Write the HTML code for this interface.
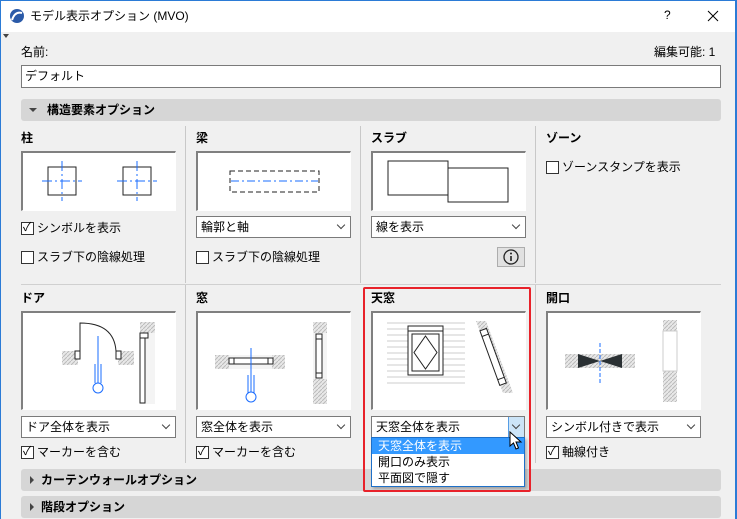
<!DOCTYPE html>
<html><head><meta charset="utf-8"><style>
*{box-sizing:border-box;margin:0;padding:0}
body{width:737px;height:519px;overflow:hidden;background:#f0f0f0;font-family:"Liberation Sans","Noto Sans CJK JP",sans-serif;font-size:12px;color:#000;position:relative}
.a{position:absolute}
.t{position:absolute;white-space:nowrap;line-height:14px}
.b{font-weight:bold}
.hdr{position:absolute;left:21px;width:700px;height:22px;background:#d6d6d6;border-radius:3px}
.hdr span{position:absolute;left:26px;top:4px;font-weight:bold;line-height:14px}
.prev{position:absolute;width:155px;background:#fff;border:1px solid #fff;border-top:2px solid #808080;border-left:2px solid #808080}
.dd{position:absolute;width:155px;height:22px;background:#fff;border:1px solid #7a7a7a}
.dd span{position:absolute;left:4px;top:3px;line-height:14px}
.dd i{position:absolute;right:6px;top:5px;width:6px;height:6px;border-right:1px solid #444;border-bottom:1px solid #444;transform:rotate(45deg)}
.cb{position:absolute;width:13px;height:13px;border:1px solid #333;background:#fff}
.vl{position:absolute;width:1px;background:#c8c8c8}
.top{z-index:5}
</style></head><body>
<div class="a" style="left:0;top:0;width:737px;height:32px;background:#fff"></div>
<div class="a" style="left:0;top:0;width:1px;height:519px;background:#2b7bd6"></div>
<div class="a" style="left:735px;top:0;width:2px;height:519px;background:#2b7bd6"></div>
<div class="a" style="left:0;top:0;width:737px;height:1px;background:#2b7bd6"></div>
<svg class="a" style="left:9px;top:8px" width="16" height="16"><circle cx="8" cy="8" r="7" fill="#2a5aa8"/><path d="M3 12 Q6 3 13 5" stroke="#fff" stroke-width="2" fill="none"/></svg>
<div class="t" style="left:30px;top:9px">モデル表示オプション (MVO)</div>
<div class="t" style="left:664px;top:8px">?</div>
<svg class="a" style="left:707px;top:10px" width="12" height="12"><path d="M1 1L11 11M11 1L1 11" stroke="#000" stroke-width="1"/></svg>
<div class="a" style="left:3px;top:34px;border:3px solid transparent;border-top:4px solid #444"></div>

<div class="t" style="left:21px;top:45px">名前:</div>
<div class="t" style="left:654px;top:45px">編集可能: 1</div>
<div class="a" style="left:21px;top:65px;width:700px;height:23px;background:#fff;border:1px solid #7a7a7a"></div>
<div class="t" style="left:25px;top:69px">デフォルト</div>

<div class="hdr" style="top:99px"><span>構造要素オプション</span></div>
<div class="a" style="left:29px;top:108px;border:4px solid transparent;border-top:4px solid #444"></div>

<div class="vl" style="left:185px;top:126px;height:157px"></div>
<div class="vl" style="left:360px;top:126px;height:157px"></div>
<div class="vl" style="left:535px;top:126px;height:157px"></div>
<div class="vl" style="left:185px;top:285px;height:178px"></div>
<div class="vl" style="left:535px;top:285px;height:178px"></div>
<div class="a" style="left:21px;top:284px;width:700px;height:1px;background:#d0d0d0"></div>

<div class="t b" style="left:21px;top:131px">柱</div>
<div class="prev" style="left:21px;top:151px;height:60px"><svg width="152" height="57"><g fill="none"><rect x="25" y="14" width="28" height="28" stroke="#222"/><rect x="100" y="14" width="28" height="28" stroke="#222"/><g stroke="#1a6cff"><path d="M19 28H59M39 8V48M94 28H134M114 8V48" stroke-dasharray="10 3 2 3"/></g></g></svg></div>
<div class="cb" style="left:21px;top:222px"></div><div class="t" style="left:23px;top:220px">✓</div>
<div class="t" style="left:37px;top:221px">シンボルを表示</div>
<div class="cb" style="left:21px;top:251px"></div>
<div class="t" style="left:37px;top:250px">スラブ下の陰線処理</div>

<div class="t b" style="left:196px;top:131px">梁</div>
<div class="prev" style="left:196px;top:151px;height:60px"><svg width="152" height="57"><rect x="32" y="18" width="89" height="21" fill="none" stroke="#222" stroke-dasharray="5 3"/><path d="M33 28H120" stroke="#1a6cff" stroke-dasharray="8 3 2 3"/></svg></div>
<div class="dd" style="left:196px;top:216px"><span>輪郭と軸</span><i></i></div>
<div class="cb" style="left:196px;top:251px"></div>
<div class="t" style="left:212px;top:250px">スラブ下の陰線処理</div>

<div class="t b" style="left:371px;top:131px">スラブ</div>
<div class="prev" style="left:371px;top:151px;height:60px"><svg width="152" height="57"><rect x="15" y="8" width="60" height="34" fill="none" stroke="#222"/><rect x="75" y="15" width="60" height="34" fill="#fff" stroke="#222"/></svg></div>
<div class="dd" style="left:371px;top:216px"><span>線を表示</span><i></i></div>
<div class="a" style="left:497px;top:247px;width:28px;height:20px;background:#e1e1e1;border:1px solid #adadad"></div>
<svg class="a" style="left:502px;top:248px" width="18" height="18"><circle cx="9" cy="9" r="7" fill="none" stroke="#222" stroke-width="1.3"/><path d="M9 8V13" stroke="#222" stroke-width="1.6"/><circle cx="9" cy="5.5" r="1" fill="#222"/></svg>

<div class="t b" style="left:546px;top:131px">ゾーン</div>
<div class="cb" style="left:546px;top:161px"></div>
<div class="t" style="left:562px;top:160px">ゾーンスタンプを表示</div>

<div class="t b" style="left:21px;top:291px">ドア</div>
<div class="prev" style="left:21px;top:311px;height:99px"><svg width="152" height="96"><defs><pattern id="h" width="4" height="4" patternUnits="userSpaceOnUse"><rect width="4" height="4" fill="#e8e8e8"/><path d="M0 4L4 0" stroke="#bbb"/></pattern></defs>
<rect x="39" y="38" width="16" height="14" fill="url(#h)"/><rect x="95" y="38" width="16" height="14" fill="url(#h)"/>
<rect x="52" y="38" width="5" height="8" fill="#fff" stroke="#222"/><rect x="93" y="38" width="5" height="8" fill="#fff" stroke="#222"/>
<path d="M57 38V10Q91 10 93 38" fill="none" stroke="#222"/>
<path d="M75 23V70M72 51V70M78 51V70" stroke="#1a6cff"/><circle cx="75" cy="75" r="5" fill="#fff" stroke="#1a6cff"/>
<rect x="117" y="9" width="15" height="82" fill="url(#h)"/><rect x="117" y="20" width="15" height="71" fill="#f4f4f4"/><rect x="117" y="25" width="5" height="65" fill="#fff" stroke="#222"/><rect x="117" y="20" width="8" height="5" fill="#fff" stroke="#222"/></svg></div>
<div class="dd" style="left:21px;top:416px"><span>ドア全体を表示</span><i></i></div>
<div class="cb" style="left:21px;top:446px"></div><div class="t" style="left:23px;top:444px">✓</div>
<div class="t" style="left:37px;top:445px">マーカーを含む</div>

<div class="t b" style="left:196px;top:291px">窓</div>
<div class="prev" style="left:196px;top:311px;height:99px"><svg width="152" height="96"><rect x="17" y="42" width="70" height="14" fill="url(#h)"/><rect x="31" y="42" width="43" height="14" fill="#f4f4f4"/><rect x="31" y="45" width="44" height="6" fill="#fff" stroke="#222"/><path d="M36 45V51M70 45V51" stroke="#222"/>
<path d="M53 35V82M50 62V82M56 62V82" stroke="#1a6cff"/><circle cx="53" cy="84" r="5" fill="#fff" stroke="#1a6cff"/>
<rect x="115" y="9" width="14" height="82" fill="url(#h)"/><rect x="115" y="20" width="14" height="46" fill="#f4f4f4"/><rect x="118" y="21" width="6" height="44" fill="#fff" stroke="#222"/><path d="M118 26H124M118 60H124" stroke="#222"/></svg></div>
<div class="dd" style="left:196px;top:416px"><span>窓全体を表示</span><i></i></div>
<div class="cb" style="left:196px;top:446px"></div><div class="t" style="left:198px;top:444px">✓</div>
<div class="t" style="left:212px;top:445px">マーカーを含む</div>

<div class="t b" style="left:371px;top:291px">天窓</div>
<div class="prev" style="left:371px;top:311px;height:99px"><svg width="152" height="96"><g stroke="#ccc"><path d="M14 10H92M14 16H92M14 22H92M14 28H92M14 34H92M14 40H92M14 46H92M14 52H92M14 58H92M14 64H92M14 70H92"/></g>
<rect x="35" y="13" width="35" height="49" fill="#fff" stroke="#222"/><path d="M35 18H70" stroke="#222"/><rect x="39" y="21" width="27" height="37" fill="none" stroke="#222"/><path d="M52.5 23L64 39.5L52.5 56L41 39.5Z" fill="none" stroke="#222"/>
<path d="M103 8L113 8L140 80L130 80Z" fill="url(#h)"/><g transform="rotate(-20 120 45)"><rect x="117" y="15" width="7" height="58" fill="#fff" stroke="#222"/><path d="M117 21H124M117 67H124" stroke="#222"/></g></svg></div>
<div class="dd" style="left:371px;top:416px;width:154px"><span>天窓全体を表示</span><div class="a" style="right:0;top:0;width:16px;height:20px;background:#cce4f7;border-left:1px solid #569de5"></div><i style="right:5px"></i></div>

<div class="t b" style="left:546px;top:291px">開口</div>
<div class="prev" style="left:546px;top:311px;height:99px"><svg width="152" height="96"><rect x="17" y="41" width="70" height="14" fill="url(#h)"/><path d="M30 41L52 48L30 55ZM74 41L52 48L74 55Z" fill="#2a3033"/><path d="M52 30V72" stroke="#1a6cff" stroke-dasharray="4 2"/>
<rect x="115" y="7" width="14" height="82" fill="url(#h)"/><rect x="115" y="18" width="14" height="40" fill="#fff" stroke="#ccc"/></svg></div>
<div class="dd" style="left:546px;top:416px"><span>シンボル付きで表示</span><i></i></div>
<div class="cb" style="left:546px;top:446px"></div><div class="t" style="left:548px;top:444px">✓</div>
<div class="t" style="left:562px;top:445px">軸線付き</div>

<div class="hdr" style="top:469px"><span style="left:20px">カーテンウォールオプション</span></div>
<div class="a" style="left:30px;top:476px;border:4px solid transparent;border-left:4px solid #444"></div>
<div class="hdr" style="top:496px"><span style="left:20px">階段オプション</span></div>
<div class="a" style="left:30px;top:503px;border:4px solid transparent;border-left:4px solid #444"></div>

<div class="a top" style="left:371px;top:437px;width:154px;height:50px;background:#fff;border:1px solid #1e70c8;box-shadow:2px 2px 3px rgba(0,0,0,.25)"></div>
<div class="a top" style="left:372px;top:438px;width:152px;height:16px;background:#3399ff"></div>
<div class="t top" style="left:378px;top:439px;color:#fff">天窓全体を表示</div>
<div class="t top" style="left:378px;top:455px">開口のみ表示</div>
<div class="t top" style="left:378px;top:471px">平面図で隠す</div>
<div class="a top" style="left:363px;top:287px;width:168px;height:205px;border:2px solid #e8222a;border-radius:2px"></div>
<svg class="a top" style="left:509px;top:431px" width="14" height="20"><path d="M1 1V15L4.5 12L7 18L9.5 17L7 11H12Z" fill="#fff" stroke="#000"/></svg>
</body></html>
